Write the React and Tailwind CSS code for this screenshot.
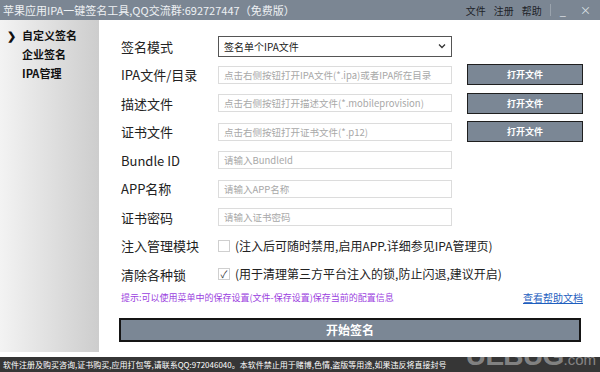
import React from 'react';

const cjk = { fontFamily: '"Noto Sans CJK SC", "Noto Sans", sans-serif' };

const Field = ({ label, placeholder, button }) => (
    <div className="flex items-center h-[28.5px]">
        <div className="w-[97px] text-[13px] text-[#222]">{label}</div>
        <div className="w-[234px] h-[18px] border border-[#dcdcdc] bg-white flex items-center px-[5px] text-[9.5px] text-[#a8a8a8] whitespace-nowrap overflow-hidden">
            {placeholder}
        </div>
        {button && (
            <button className="ml-[15px] w-[116px] h-[21px] bg-[#7b8795] border border-[#1f1f1f] text-white text-[9px] font-bold">
                打开文件
            </button>
        )}
    </div>
);

const CheckRow = ({ label, checked, text }) => (
    <div className="flex items-center h-[28.5px]">
        <div className="w-[97px] text-[13px] text-[#222]">{label}</div>
        <div className="w-[12px] h-[12px] border border-[#cfcfcf] bg-white flex items-center justify-center text-[10px] leading-none text-[#333]">
            {checked ? '✓' : ''}
        </div>
        <div className="ml-[5px] text-[12px] text-[#222] whitespace-nowrap">{text}</div>
    </div>
);

const App = () => {
    return (
        <div className="relative w-[600px] h-[372px] flex flex-col bg-white overflow-hidden" style={cjk}>
            <div className="h-[20px] bg-[#7b8693] flex items-center pl-[3px] pr-[9px]">
                <div className="text-[11px] text-[#eef1f4] whitespace-nowrap">苹果应用IPA一键签名工具,QQ交流群:692727447（免费版）</div>
                <div className="ml-auto flex items-center text-[10px] text-[#1e2329]">
                    <span>文件</span>
                    <span className="ml-[8px]">注册</span>
                    <span className="ml-[8px]">帮助</span>
                    <span className="ml-[8px] w-px h-[12px] bg-[#9aa3ad]" />
                    <span className="ml-[9px] text-[#dfe3e8] text-[11px] leading-none">_</span>
                    <span className="ml-[14px] text-[#dfe3e8] text-[11px] leading-none">×</span>
                </div>
            </div>

            <div className="flex-1 flex pb-[5px]">
                <div className="w-[100px] bg-gradient-to-r from-[#f3f3f3] to-[#cdcdcd] pt-[6px] text-[11px] font-bold text-[#111]">
                    <div className="flex items-center h-[19px] pl-[7px]">
                        <span className="w-[15px] text-[11px]">❯</span>
                        <span>自定义签名</span>
                    </div>
                    <div className="h-[19px] flex items-center pl-[22px]">企业签名</div>
                    <div className="h-[19px] flex items-center pl-[22px]">IPA管理</div>
                </div>

                <div className="flex-1 pl-[22px] pr-[17px] pt-3">
                    <div className="flex items-center h-[28.5px]">
                        <div className="w-[97px] text-[13px] text-[#222]">签名模式</div>
                        <div className="w-[234px] h-[21px] border border-[#555] bg-white flex items-center px-[5px] text-[10px] text-[#222]">
                            <span>签名单个IPA文件</span>
                            <svg className="ml-auto" width="8" height="6" viewBox="0 0 8 6">
                                <path d="M1 1.5 L4 4.5 L7 1.5" fill="none" stroke="#333" strokeWidth="1.3" />
                            </svg>
                        </div>
                    </div>
                    <Field label="IPA文件/目录" placeholder="点击右侧按钮打开IPA文件(*.ipa)或者IPA所在目录" button />
                    <Field label="描述文件" placeholder="点击右侧按钮打开描述文件(*.mobileprovision)" button />
                    <Field label="证书文件" placeholder="点击右侧按钮打开证书文件(*.p12)" button />
                    <Field label="Bundle ID" placeholder="请输入BundleId" />
                    <Field label="APP名称" placeholder="请输入APP名称" />
                    <Field label="证书密码" placeholder="请输入证书密码" />
                    <CheckRow label="注入管理模块" text="(注入后可随时禁用,启用APP.详细参见IPA管理页)" />
                    <CheckRow label="清除各种锁" checked text="(用于清理第三方平台注入的锁,防止闪退,建议开启)" />

                    <div className="flex items-center h-[14px] mt-[2px]">
                        <span className="text-[9px] text-[#9b3fe0] whitespace-nowrap">提示:可以使用菜单中的保存设置(文件-保存设置)保存当前的配置信息</span>
                        <span className="ml-auto text-[10px] text-[#1f5fbf] underline whitespace-nowrap">查看帮助文档</span>
                    </div>

                    <button className="mt-[13px] w-full h-[24px] -ml-[2px] bg-[#7b8795] border-2 border-[#151515] text-white text-[12px] font-bold">
                        开始签名
                    </button>
                </div>
            </div>

            <div className="h-[15px] bg-[#363636] flex items-center pl-[3px] text-[8px] text-white whitespace-nowrap">
                软件注册及购买咨询,证书购买,应用打包等,请联系QQ:972046040。本软件禁止用于赌博,色情,盗版等用途,如果违反将直接封号
            </div>

            <div className="absolute right-[4px] bottom-[2px] flex items-end text-white/40 pointer-events-none" style={{ fontFamily: '"Liberation Sans", Arial, sans-serif' }}>
                <span className="text-[28px] font-black leading-none tracking-tight">UEBUG</span>
                <span className="text-[15px] leading-none mb-[3px]">.com</span>
            </div>
        </div>
    );
};

export default App;
